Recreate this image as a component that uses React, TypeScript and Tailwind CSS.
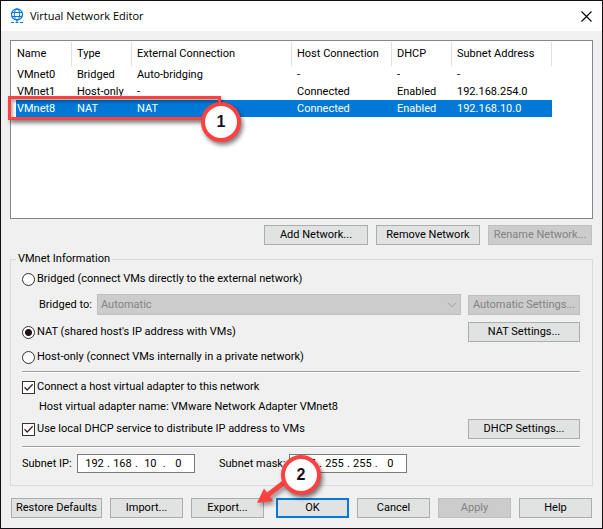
import React, { useState } from 'react';

type Network = {
    name: string;
    type: string;
    external: string;
    host: string;
    dhcp: string;
    subnet: string;
};

const networks: Network[] = [
    { name: 'VMnet0', type: 'Bridged', external: 'Auto-bridging', host: '-', dhcp: '-', subnet: '-' },
    { name: 'VMnet1', type: 'Host-only', external: '-', host: 'Connected', dhcp: 'Enabled', subnet: '192.168.254.0' },
    { name: 'VMnet8', type: 'NAT', external: 'NAT', host: 'Connected', dhcp: 'Enabled', subnet: '192.168.10.0' },
];

const columns = [
    { title: 'Name', width: 'w-[60px]' },
    { title: 'Type', width: 'w-[60px]' },
    { title: 'External Connection', width: 'w-[160px]' },
    { title: 'Host Connection', width: 'w-[100px]' },
    { title: 'DHCP', width: 'w-[60px]' },
    { title: 'Subnet Address', width: 'w-[100px]' },
];

type ButtonProps = {
    children: React.ReactNode;
    className: string;
    disabled?: boolean;
    primary?: boolean;
};

const Button = ({ children, className, disabled, primary }: ButtonProps) => {
    const look = disabled
        ? 'border border-[#bfbfbf] bg-[#cccccc] text-[#838383]'
        : primary
            ? 'border-2 border-[#0078d7] bg-[#e1e3e2]'
            : 'border border-[#adadad] bg-[#e1e3e2]';
    return (
        <button type="button" disabled={disabled} className={`flex h-5 shrink-0 items-center justify-center whitespace-nowrap ${look} ${className}`}>
            {children}
        </button>
    );
}

const Radio = ({ label, checked, onChange }: { label: string; checked: boolean; onChange: () => void }) => (
    <label className="flex h-5 items-center gap-0.5">
        <input
            type="radio"
            name="mode"
            checked={checked}
            onChange={onChange}
            className="size-[13px] appearance-none rounded-full border border-[#333333] bg-white bg-clip-padding checked:border-[#333333] checked:bg-[radial-gradient(circle,#1f101c_3px,#ffffff_4px)]"
        />
        {label}
    </label>
);

const Checkbox = ({ label }: { label: string }) => (
    <label className="grid h-5 grid-cols-[13px_auto] items-center gap-0.5">
        <input type="checkbox" defaultChecked className="peer col-start-1 row-start-1 size-[13px] appearance-none border border-[#333333] bg-white" />
        <svg viewBox="0 0 13 13" className="pointer-events-none invisible col-start-1 row-start-1 size-[13px] peer-checked:visible" fill="none" stroke="#3b2238" strokeWidth="1.3">
            <path d="M2.5 6.3 5.2 9 10.7 3.3" />
        </svg>
        <span>{label}</span>
    </label>
);

const AddressField = ({ label, octets }: { label: string; octets: string[] }) => (
    <div role="group" aria-label={label} className="flex h-[19px] w-[118px] items-center border border-[#7a7a7a] bg-white px-1">
        {octets.map((octet, i) => (
            <React.Fragment key={i}>
                {i > 0 && <span className="w-[3px] text-center">.</span>}
                <input aria-label={`${label} octet ${i + 1}`} defaultValue={octet} className="w-[25px] bg-transparent text-center outline-none" />
            </React.Fragment>
        ))}
    </div>
);

const Separator = () => <hr className="border-t border-b border-t-[#a0a0a0] border-b-white" />;

const Marker = ({ n, className }: { n: number; className: string }) => (
    <div className={`absolute flex size-10 items-center justify-center rounded-full border-4 border-[#fd4140] bg-white font-['Liberation_Sans'] text-base font-bold text-[#1c1018] shadow-[2px_3px_4px_rgba(0,0,0,0.5)] ${className}`}>
        {n}
    </div>
);

const NetworkTable = () => (
    <div className="relative h-[179px] border border-[#828790] bg-white p-px">
        <table className="table-fixed border-separate border-spacing-0 text-left">
            <thead>
                <tr className="h-6">
                    {columns.map(c => (
                        <th key={c.title} className={`border-r border-[#e0e0e0] p-0 pl-[5px] font-normal whitespace-nowrap ${c.width}`}>{c.title}</th>
                    ))}
                </tr>
            </thead>
            <tbody>
                {networks.map(n => (
                    <tr key={n.name} className={n.name === 'VMnet8' ? 'h-[17px] bg-[#0078d7] text-white' : 'h-[17px]'}>
                        {[n.name, n.type, n.external, n.host, n.dhcp, n.subnet].map((v, i) => (
                            <td key={i} className="p-0 pl-[5px] whitespace-nowrap first:border-l-4 first:border-white first:pl-px">{v}</td>
                        ))}
                    </tr>
                ))}
            </tbody>
        </table>
        <div className="absolute top-[55px] -left-[3px] h-6 w-[213px] border-[3px] border-[#fd4140] shadow-[2px_3px_4px_rgba(0,0,0,0.5),inset_2px_3px_3px_rgba(0,0,0,0.3)]" />
        <Marker n={1} className="top-[61px] left-[190px]" />
    </div>
);

export default function App() {
    const [mode, setMode] = useState('nat');

    return (
        <div className="w-full border border-[#170d14] bg-[#f0f0f0] font-['Roboto',sans-serif] text-[11px] leading-4 text-black">
            <header className="flex h-[30px] items-center bg-white pr-2 pl-[9px]">
                <svg viewBox="0 0 14 16" className="h-4 w-3.5" fill="none" stroke="#0078d7">
                    <circle cx="7" cy="6.5" r="5.5" strokeWidth="1.3" />
                    <ellipse cx="7" cy="6.5" rx="2.6" ry="5.5" />
                    <path d="M2 4.5h10M2 8.5h10M7 12v2" />
                    <path d="M1 14.5h3M5.5 14.5h3M10 14.5h3" />
                </svg>
                <h1 className="ml-1.5 flex-1 font-['Open_Sans',sans-serif] text-[11px]">Virtual Network Editor</h1>
                <button type="button" aria-label="Close" className="p-0.5">
                    <svg viewBox="0 0 11 11" className="size-[11px]" stroke="#000000" strokeWidth="1.1">
                        <path d="M.5.5l10 10M10.5.5l-10 10" />
                    </svg>
                </button>
            </header>

            <main className="px-[9px] pt-[9px] pb-[10px]">
                <NetworkTable />

                <div className="mt-1.5 flex justify-end gap-2 pr-px">
                    <Button className="w-[104px]">Add Network...</Button>
                    <Button className="w-[104px]">Remove Network</Button>
                    <Button className="w-[104px]" disabled>Rename Network...</Button>
                </div>

                <fieldset className="mt-1.5 border border-[#d5dcd9] pr-3 pb-3 pl-[11px]">
                    <legend className="-ml-1.5 px-0.5">VMnet Information</legend>
                    <div className="mt-0.5">
                        <Radio label="Bridged (connect VMs directly to the external network)" checked={mode === 'bridged'} onChange={() => setMode('bridged')} />
                    </div>
                    <div className="mt-[5px] flex items-center pl-[17px]">
                        <label htmlFor="bridge" className="w-[58px]">Bridged to:</label>
                        <div className="grid flex-1">
                            <select id="bridge" disabled className="col-start-1 row-start-1 h-[21px] appearance-none border border-[#bfbfbf] bg-[#cccccc] pl-[3px] text-[#838383] opacity-100">
                                <option>Automatic</option>
                            </select>
                            <svg viewBox="0 0 10 6" className="pointer-events-none col-start-1 row-start-1 mr-1 h-1.5 w-2.5 self-center justify-self-end" fill="none" stroke="#a0a0a0">
                                <path d="M1 .8 5 4.8 9 .8" />
                            </svg>
                        </div>
                        <Button className="ml-[7px] w-28" disabled>Automatic Settings...</Button>
                    </div>
                    <div className="mt-[7px] flex items-center justify-between">
                        <Radio label="NAT (shared host's IP address with VMs)" checked={mode === 'nat'} onChange={() => setMode('nat')} />
                        <Button className="w-28">NAT Settings...</Button>
                    </div>
                    <div className="mt-[5px] mb-1">
                        <Radio label="Host-only (connect VMs internally in a private network)" checked={mode === 'host'} onChange={() => setMode('host')} />
                    </div>
                    <Separator />
                    <div className="mt-1">
                        <Checkbox label="Connect a host virtual adapter to this network" />
                    </div>
                    <p className="mt-0.5 pl-[17px]">Host virtual adapter name: VMware Network Adapter VMnet8</p>
                    <div className="mt-1 mb-[7px] flex items-center justify-between">
                        <Checkbox label="Use local DHCP service to distribute IP address to VMs" />
                        <Button className="w-28">DHCP Settings...</Button>
                    </div>
                    <Separator />
                    <div className="mt-1.5 flex items-center">
                        <span className="w-[55px]">Subnet IP:</span>
                        <AddressField label="Subnet IP" octets={['192', '168', '10', '0']} />
                        <span className="ml-6 w-[70px] whitespace-nowrap">Subnet mask:</span>
                        <AddressField label="Subnet mask" octets={['255', '255', '255', '0']} />
                    </div>
                </fieldset>

                <footer className="mt-3 flex justify-between px-px">
                    <div className="flex gap-2">
                        <Button className="w-[91px]">Restore Defaults</Button>
                        <Button className="w-[73px]">Import...</Button>
                        <div className="relative">
                            <Button className="w-[73px]">Export...</Button>
                            <svg viewBox="0 0 40 34" className="absolute -top-6 left-[62px] h-[34px] w-10 drop-shadow-[2px_3px_2px_rgba(0,0,0,0.4)]">
                                <path d="M4 29 11 14.500 14 18.500 29 7 32 11 17 22.500 20 27Z" fill="#fd4140" />
                            </svg>
                            <Marker n={2} className="-top-[43px] left-[90px]" />
                        </div>
                    </div>
                    <div className="flex gap-2">
                        <Button className="w-[73px]" primary>OK</Button>
                        <Button className="w-[73px]">Cancel</Button>
                        <Button className="w-[73px]" disabled>Apply</Button>
                        <Button className="w-[73px]">Help</Button>
                    </div>
                </footer>
            </main>
        </div>
    );
}
